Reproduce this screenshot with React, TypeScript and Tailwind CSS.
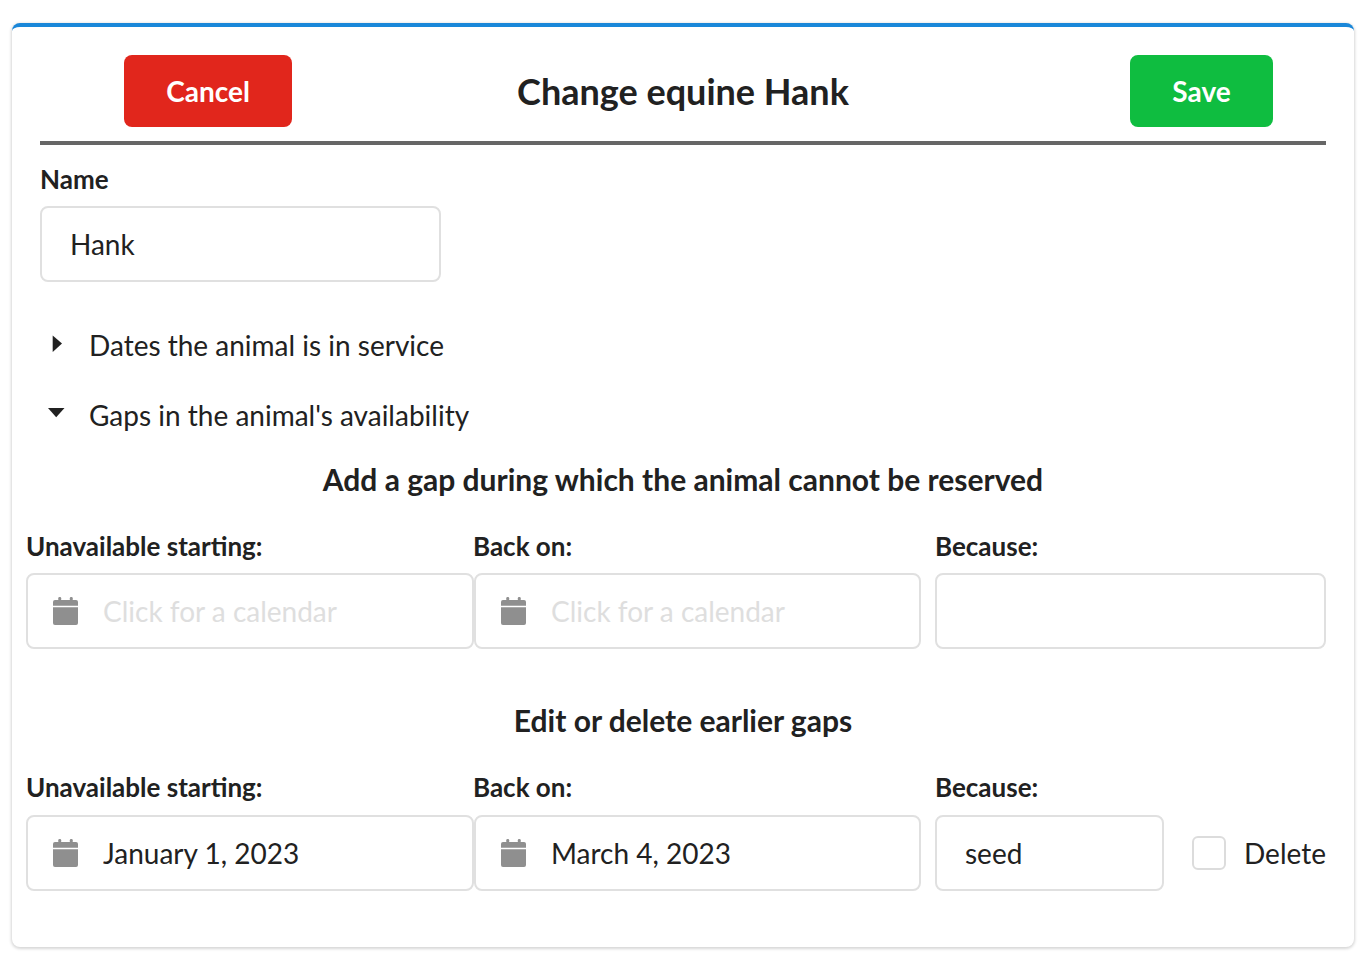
function CalendarIcon() {
  return (
    <svg width="25" height="29" viewBox="0 0 26 30" className="mt-px shrink-0">
      <rect x="5.5" y="0" width="3" height="6" rx="1.2" fill="#8f8f8f" />
      <rect x="17.5" y="0" width="3" height="6" rx="1.2" fill="#8f8f8f" />
      <path d="M2 3h22a2 2 0 0 1 2 2v4H0V5a2 2 0 0 1 2-2z" fill="#8f8f8f" />
      <path d="M0 10.5h26V27a2 2 0 0 1-2 2H2a2 2 0 0 1-2-2z" fill="#8f8f8f" />
    </svg>
  );
}

function DateField({ value, className }: { value?: string; className: string }) {
  return (
    <div className={`flex h-[76px] shrink-0 items-center rounded-lg border-2 border-[#e0e0e0] bg-white pl-[25px] ${className}`}>
      <CalendarIcon />
      <input
        readOnly
        value={value ?? ''}
        placeholder="Click for a calendar"
        className="ml-[25px] w-[300px] bg-transparent text-[#212121] outline-none placeholder:text-[#dedede]"
      />
    </div>
  );
}

function TextField({ value, className }: { value?: string; className: string }) {
  return (
    <input
      readOnly
      value={value ?? ''}
      className={`h-[76px] shrink-0 rounded-lg border-2 border-[#e0e0e0] bg-white px-7 text-[#212121] outline-none ${className}`}
    />
  );
}

function Labels() {
  return (
    <div className="flex text-[26px] leading-[34px] font-bold">
      <div className="w-[447px]">Unavailable starting:</div>
      <div className="w-[462px]">Back on:</div>
      <div>Because:</div>
    </div>
  );
}

export default function App() {
  return (
    <div className="min-h-[964px] bg-white pt-[23px] pl-[12px] text-[28px] leading-9 text-[#212121] [font-family:Lato,sans-serif]">
      <div className="h-[924px] w-[1342px] rounded-lg border-t-4 border-[#1a87d9] bg-white pt-7 pr-[28px] pl-[14px] shadow-[0_1px_3px_1px_rgba(0,0,0,0.16)]">
        {/* Header */}
        <div className="ml-[14px] flex h-[90px] items-start border-b-4 border-[#666666]">
          <div className="relative flex w-full items-center pl-[84px]">
            <button className="h-[72px] w-[168px] rounded-lg bg-[#e1261c] text-[28px] font-bold text-white">
              Cancel
            </button>
            <h1 className="absolute left-0 right-0 text-center text-[36px] leading-[72px] font-bold">
              Change equine Hank
            </h1>
            <button className="ml-auto mr-[53px] h-[72px] w-[143px] rounded-lg bg-[#0fbd40] text-[28px] font-bold text-white">
              Save
            </button>
          </div>
        </div>

        {/* Name */}
        <div className="ml-[14px] mt-[17px] text-[26px] leading-[34px] font-bold">Name</div>
        <TextField value="Hank" className="ml-[14px] mt-[10px] block w-[401px]" />

        {/* Sections */}
        <div className="ml-[22px] mt-[45px] flex items-center gap-[23px]">
          <svg width="12" height="20" viewBox="0 0 12 20" className="-mt-0.5 ml-[4px] mr-[2px]">
            <path d="M0.7 1.5 L10 9.5 L0.7 18z" fill="#212121" />
          </svg>
          <span>Dates the animal is in service</span>
        </div>
        <div className="ml-[22px] mt-[34px] flex items-center gap-[23px]">
          <svg width="18" height="12" viewBox="0 0 18 12" className="-mt-1">
            <path d="M0 1 L16.5 1 L8.2 10.2z" fill="#212121" />
          </svg>
          <span>Gaps in the animal's availability</span>
        </div>

        {/* New gap */}
        <h2 className="ml-[14px] mt-[26px] text-center text-[30px] leading-10 font-bold">
          Add a gap during which the animal cannot be reserved
        </h2>
        <div className="mt-[30px]">
          <Labels />
        </div>
        <div className="mt-[10px] flex">
          <DateField className="w-[448px]" />
          <DateField className="w-[447px]" />
          <TextField className="ml-[14px] w-[391px]" />
        </div>

        {/* Earlier gaps */}
        <h2 className="ml-[14px] mt-[51px] text-center text-[30px] leading-10 font-bold">
          Edit or delete earlier gaps
        </h2>
        <div className="mt-[30px]">
          <Labels />
        </div>
        <div className="mt-[11px] flex items-center">
          <DateField value="January 1, 2023" className="w-[448px]" />
          <DateField value="March 4, 2023" className="w-[447px]" />
          <TextField value="seed" className="ml-[14px] w-[229px]" />
          <div className="ml-[28px] h-[34px] w-[34px] shrink-0 rounded-md border-2 border-[#dcdcdc] bg-white" />
          <span className="-mt-px ml-[18px]">Delete</span>
        </div>
      </div>
    </div>
  );
}
